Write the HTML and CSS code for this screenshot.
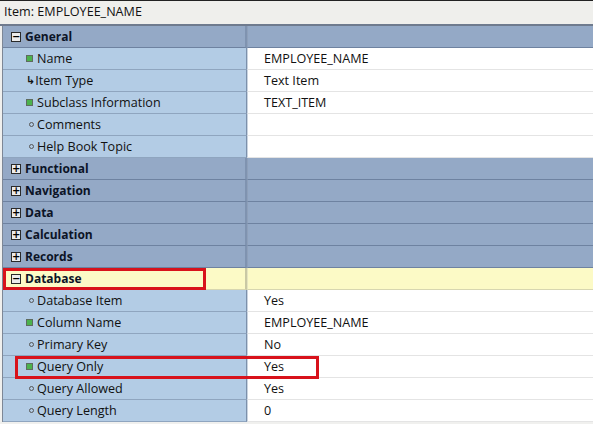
FILE: index.html
```html
<!DOCTYPE html>
<html>
<head>
<meta charset="utf-8">
<link rel="stylesheet" href="styles.css">
</head>
<body>
<div class="panel">
  <div class="title">Item: EMPLOYEE_NAME</div>
  <div class="grid">
    <div class="row group"><div class="k"><span class="box">&minus;</span>General</div><div class="v"></div></div>
    <div class="row prop"><div class="k"><span class="sq"></span>Name</div><div class="v">EMPLOYEE_NAME</div></div>
    <div class="row prop"><div class="k"><span class="arr">&#8627;</span>Item Type</div><div class="v">Text Item</div></div>
    <div class="row prop"><div class="k"><span class="sq"></span>Subclass Information</div><div class="v">TEXT_ITEM</div></div>
    <div class="row prop"><div class="k"><span class="dot"></span>Comments</div><div class="v"></div></div>
    <div class="row prop"><div class="k"><span class="dot"></span>Help Book Topic</div><div class="v"></div></div>
    <div class="row group"><div class="k"><span class="box">+</span>Functional</div><div class="v"></div></div>
    <div class="row group"><div class="k"><span class="box">+</span>Navigation</div><div class="v"></div></div>
    <div class="row group"><div class="k"><span class="box">+</span>Data</div><div class="v"></div></div>
    <div class="row group"><div class="k"><span class="box">+</span>Calculation</div><div class="v"></div></div>
    <div class="row group"><div class="k"><span class="box">+</span>Records</div><div class="v"></div></div>
    <div class="row group sel"><div class="k"><span class="box">&minus;</span>Database<span class="mark mark-db"></span></div><div class="v"></div></div>
    <div class="row prop"><div class="k"><span class="dot"></span>Database Item</div><div class="v">Yes</div></div>
    <div class="row prop"><div class="k"><span class="sq"></span>Column Name</div><div class="v">EMPLOYEE_NAME</div></div>
    <div class="row prop"><div class="k"><span class="dot"></span>Primary Key</div><div class="v">No</div></div>
    <div class="row prop"><div class="k"><span class="sq"></span>Query Only<span class="mark mark-qo"></span></div><div class="v">Yes</div></div>
    <div class="row prop"><div class="k"><span class="dot"></span>Query Allowed</div><div class="v">Yes</div></div>
    <div class="row prop"><div class="k"><span class="dot"></span>Query Length</div><div class="v">0</div></div>
  </div>
</div>
</body>
</html>
```
FILE: styles.css
```css
html, body {
  margin: 0;
  padding: 0;
  background: #ffffff;
}
body {
  font-family: "Open Sans", "Liberation Sans", sans-serif;
  font-size: 12.6px;
  color: #111;
}
.panel {
  width: 593px;
  height: 424px;
  overflow: hidden;
  border-top: 1px solid #222;
  box-sizing: border-box;
  background: #f0f0ee;
}
.title {
  height: 23px;
  line-height: 22px;
  padding-left: 4px;
  background: #efefec;
  border-bottom: 2px solid #6f7b8e;
  box-sizing: border-box;
  height: 25px;
}
.grid {
  display: flex;
  flex-direction: column;
  border-left: 1px solid #7d8796;
  margin-left: 2px;
}
.row {
  display: flex;
  height: 22px;
  box-sizing: border-box;
}
.k {
  position: relative;
  width: 244px;
  flex: none;
  display: flex;
  align-items: center;
  box-sizing: border-box;
  border-right: 1px solid #7c90ab;
  padding-left: 23px;
  white-space: nowrap;
}
.v {
  flex: 1;
  display: flex;
  align-items: center;
  padding-left: 16px;
  white-space: nowrap;
}
.group .k, .group .v {
  background: #94a9c6;
  border-bottom: 1px solid #6e82a0;
  font-weight: bold;
  font-size: 12px;
  padding-left: 8px;
  color: #0c1426;
}
.group .k { border-right: 2px solid #7f93b0; }
.group .v { border-left: 1px solid #8ea0ba; }
.sel .k, .sel .v {
  background: #fcfac6;
  border-bottom: 1px solid #d7d6b0;
}
.sel .k { border-right: 2px solid #c9c8a4; }
.sel .v { border-left: 1px solid #e6e5bf; }
.prop .k {
  background: #b3cce5;
  border-bottom: 1px solid #8fa5bf;
}
.prop .v {
  background: #ffffff;
  border-bottom: 1px solid #e4e4e4;
  border-left: 1px solid #c9d4e0;
}
.box {
  width: 8px;
  height: 8px;
  background: #ececec;
  border: 1px solid #2a2a2a;
  color: #000;
  font-size: 10px;
  line-height: 8px;
  text-align: center;
  font-weight: bold;
  margin-right: 4px;
  font-family: "DejaVu Sans", sans-serif;
  overflow: hidden;
}
.sq {
  width: 5px;
  height: 5px;
  background: #4cb24c;
  border: 1px solid #5f6b5f;
  margin-right: 4px;
}
.dot {
  width: 3px;
  height: 3px;
  border: 1px solid #555;
  border-radius: 50%;
  margin-left: 3px;
  margin-right: 3px;
}
.arr {
  font-size: 11px;
  font-weight: bold;
  margin-left: 0;
  margin-right: 0;
  font-family: "DejaVu Sans", sans-serif;
}
.mark {
  position: absolute;
  border: 3px solid #d8121b;
  box-sizing: border-box;
  pointer-events: none;
}
.mark-db {
  left: 0;
  top: 0;
  width: 203px;
  height: 22px;
}
.mark-qo {
  left: 12px;
  top: 0;
  width: 304px;
  height: 23px;
  z-index: 2;
}
```
